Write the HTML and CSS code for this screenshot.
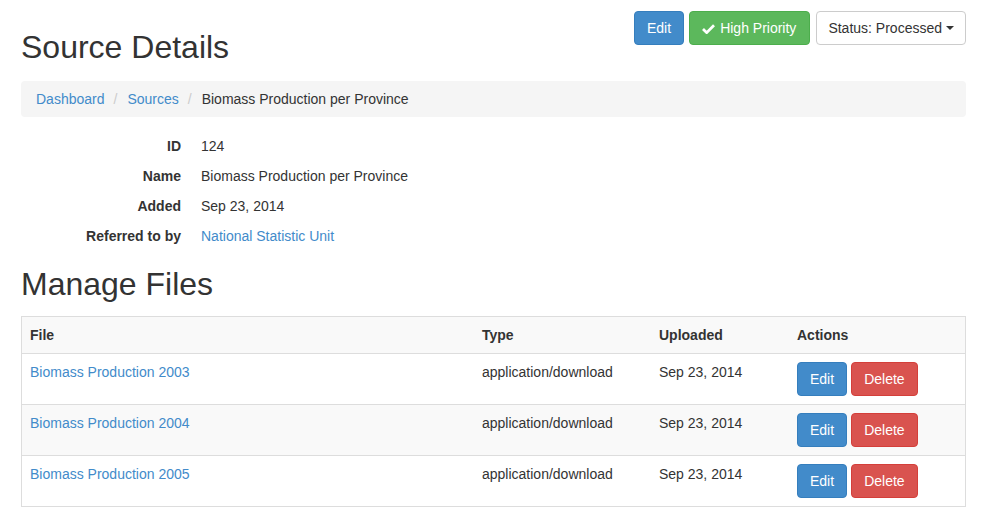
FILE: index.html
```html
<!DOCTYPE html>
<html>
<head>
<meta charset="utf-8">
<link rel="stylesheet" href="styles.css">
</head>
<body>
<div class="page">
  <div class="title-row">
    <h1 class="title">Source Details</h1>
    <div class="top-actions">
      <a class="btn btn-primary">Edit</a>
      <a class="btn btn-success"><svg class="ok" viewBox="0 0 14 12" width="13" height="11"><path d="M1 6.5 L5 10.5 L13 2.5" fill="none" stroke="#fff" stroke-width="3" stroke-linejoin="miter"/></svg>High Priority</a>
      <a class="btn btn-default">Status: Processed <span class="caret"></span></a>
    </div>
  </div>

  <ol class="breadcrumb">
    <li><a href="#">Dashboard</a></li>
    <li><a href="#">Sources</a></li>
    <li class="active">Biomass Production per Province</li>
  </ol>

  <dl class="details">
    <dt>ID</dt><dd>124</dd>
    <dt>Name</dt><dd>Biomass Production per Province</dd>
    <dt>Added</dt><dd>Sep 23, 2014</dd>
    <dt>Referred to by</dt><dd><a href="#">National Statistic Unit</a></dd>
  </dl>

  <h2 class="section">Manage Files</h2>

  <table class="files">
    <thead>
      <tr><th class="c-file">File</th><th class="c-type">Type</th><th class="c-up">Uploaded</th><th>Actions</th></tr>
    </thead>
    <tbody>
      <tr><td><a href="#">Biomass Production 2003</a></td><td>application/download</td><td>Sep 23, 2014</td><td><a class="btn btn-primary">Edit</a><a class="btn btn-danger">Delete</a></td></tr>
      <tr class="alt"><td><a href="#">Biomass Production 2004</a></td><td>application/download</td><td>Sep 23, 2014</td><td><a class="btn btn-primary">Edit</a><a class="btn btn-danger">Delete</a></td></tr>
      <tr><td><a href="#">Biomass Production 2005</a></td><td>application/download</td><td>Sep 23, 2014</td><td><a class="btn btn-primary">Edit</a><a class="btn btn-danger">Delete</a></td></tr>
    </tbody>
  </table>
</div>
</body>
</html>
```

FILE: styles.css
```css
html, body {
  margin: 0;
  padding: 0;
  background: #fff;
}
body {
  font-family: "Liberation Sans", Arial, sans-serif;
  font-size: 14px;
  line-height: 20px;
  color: #333;
}
a {
  color: #428bca;
  text-decoration: none;
}
.page {
  padding: 11px 17px 0 21px;
}
.title-row {
  display: flex;
  justify-content: space-between;
  align-items: flex-start;
}
.title {
  margin: 18px 0 0;
  font-size: 32px;
  font-weight: 500;
  line-height: 36px;
}
.top-actions {
  display: flex;
  gap: 5px;
}
.btn {
  display: inline-flex;
  align-items: center;
  box-sizing: border-box;
  height: 34px;
  padding: 6px 12px;
  font-size: 14px;
  line-height: 20px;
  border: 1px solid transparent;
  border-radius: 4px;
  color: #fff;
  white-space: nowrap;
  cursor: pointer;
}
.btn-primary {
  background: #428bca;
  border-color: #357ebd;
}
.btn-success {
  background: #5cb85c;
  border-color: #4cae4c;
  padding: 6px 13px 6px 12px;
}
.btn-danger {
  background: #d9534f;
  border-color: #d43f3a;
}
.btn-default {
  background: #fff;
  border-color: #ccc;
  color: #333;
  padding: 6px 11px;
  margin-left: 1px;
}
.ok {
  margin-right: 5px;
}
.caret {
  display: inline-block;
  width: 0;
  height: 0;
  margin-left: 4px;
  border-top: 4px solid #333;
  border-left: 4px solid transparent;
  border-right: 4px solid transparent;
}
.breadcrumb {
  list-style: none;
  margin: 16px 0 19px;
  padding: 8px 15px;
  background: #f5f5f5;
  border-radius: 4px;
  display: flex;
}
.breadcrumb li + li::before {
  content: "/";
  color: #ccc;
  padding: 0 10px 0 9px;
}
.breadcrumb .active {
  color: #333;
}
.details {
  display: grid;
  grid-template-columns: 160px 1fr;
  column-gap: 20px;
  row-gap: 10px;
  margin: 0;
}
.details dt {
  font-weight: bold;
  text-align: right;
}
.details dd {
  margin: 0;
}
.section {
  margin: 20px 0 14px;
  font-size: 32px;
  font-weight: 500;
  line-height: 36px;
}
.files {
  width: 100%;
  border-collapse: collapse;
  border: 1px solid #ddd;
}
.files th, .files td {
  text-align: left;
  vertical-align: top;
  padding: 8px;
  line-height: 20px;
  border-top: 1px solid #ddd;
}
.files thead tr {
  background: #f9f9f9;
}
.files th {
  font-weight: bold;
}
.files tr.alt {
  background: #f9f9f9;
}
.c-file { width: 436px; }
.c-type { width: 161px; }
.c-up { width: 122px; }
.files td .btn + .btn {
  margin-left: 4px;
}
```
